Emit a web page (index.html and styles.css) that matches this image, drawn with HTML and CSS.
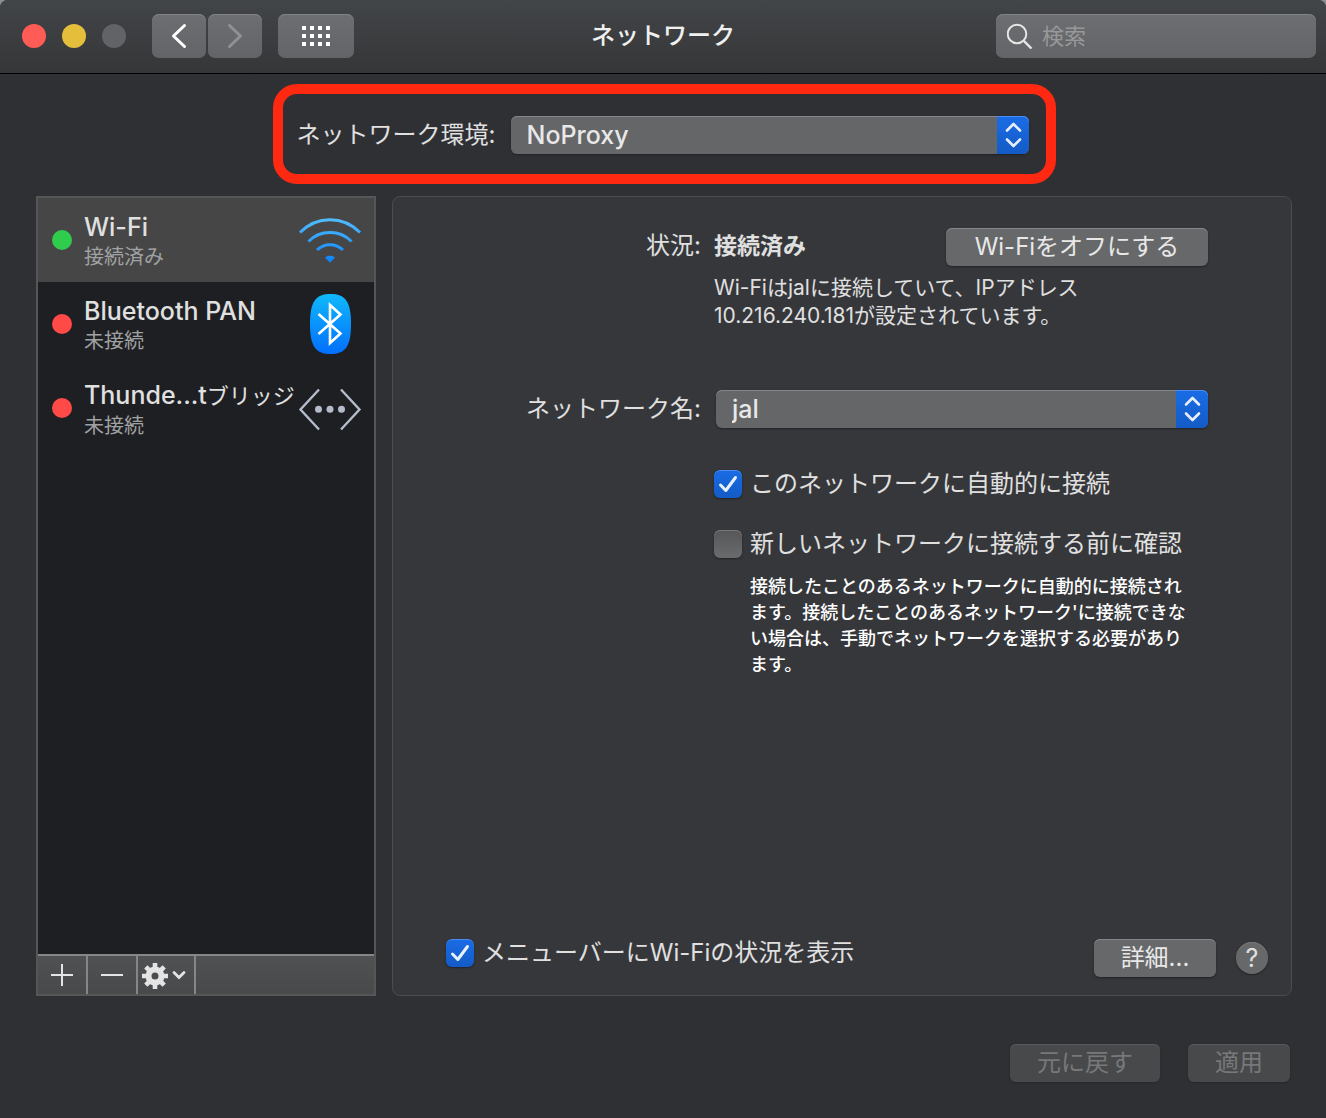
FILE: index.html
```html
<!DOCTYPE html>
<html lang="ja">
<head>
<meta charset="utf-8">
<meta name="viewport" content="width=device-width, initial-scale=1">
<title>ネットワーク</title>
<link rel="stylesheet" href="styles.css">
</head>
<body>
<div class="window">
  <header class="titlebar">
    <div class="titlebar-start">
      <div class="lights">
        <button class="light light-close" aria-label="閉じる"></button>
        <button class="light light-min" aria-label="しまう"></button>
        <button class="light light-zoom" aria-label="拡大" disabled></button>
      </div>
      <nav class="nav">
        <button class="tool" aria-label="戻る"><svg width="54" height="44" viewBox="0 0 54 44"><path d="M32.500 11.500 21.500 22 32.500 32.500" fill="none" stroke="#fff" stroke-width="3" stroke-linecap="round" stroke-linejoin="round"/></svg></button>
        <button class="tool" aria-label="進む" disabled><svg width="54" height="44" viewBox="0 0 54 44"><path d="M21.500 11.500 32.500 22 21.500 32.500" fill="none" stroke="#909194" stroke-width="3" stroke-linecap="round" stroke-linejoin="round"/></svg></button>
        <button class="tool tool-grid" aria-label="すべてを表示"><svg width="28" height="20" viewBox="0 0 28 20"><path d="M0 2h28M0 10h28M0 18h28" stroke="#fff" stroke-width="4" stroke-dasharray="4 4"/></svg></button>
      </nav>
    </div>
    <h1 class="title">ネットワーク</h1>
    <label class="search">
      <svg width="26" height="26" viewBox="0 0 26 26"><circle cx="10" cy="11" r="9.300" fill="none" stroke="#e6e6e6" stroke-width="2"/><path d="M16.800 17.800 24.500 25.500" stroke="#e6e6e6" stroke-width="2.400"/></svg>
      <input type="search" placeholder="検索" aria-label="検索">
    </label>
  </header>

  <main class="content">
    <div class="location">
      <label for="location">ネットワーク環境:</label>
      <div class="popup popup-location">
        <select id="location"><option>NoProxy</option></select>
        <svg class="popup-cap" width="32" height="38" viewBox="0 0 32 38"><path d="M10 14.500 16.500 8 23 14.500M10 23.500 16.500 30 23 23.500" fill="none" stroke="#e6eefb" stroke-width="2.600" stroke-linecap="round" stroke-linejoin="round"/></svg>
      </div>
    </div>

    <div class="panes">
      <aside class="sidebar">
        <ul class="services">
          <li class="service service-selected">
            <span class="dot dot-on"></span>
            <div class="service-text"><div class="service-name">Wi-Fi</div><div class="service-state">接続済み</div></div>
            <svg class="service-icon" width="64" height="60" viewBox="0 0 64 60">
              <defs><linearGradient id="wifi" gradientUnits="userSpaceOnUse" x1="0" y1="8" x2="0" y2="52"><stop offset="0" stop-color="#53bdfc"/><stop offset="1" stop-color="#0a84fc"/></linearGradient></defs>
              <g fill="none" stroke="url(#wifi)" stroke-width="3"><path d="M2 22.500C19 5.500 45 5.500 62 22.500"/><path d="M10.500 31.500C22 19.500 42 19.500 53.500 31.500"/><path d="M19 40C26.500 33 37.500 33 45 40"/></g>
              <path d="M27 47.500C30 45 34 45 37 47.500L32 52.800Z" fill="url(#wifi)"/>
            </svg>
          </li>
          <li class="service">
            <span class="dot dot-off"></span>
            <div class="service-text"><div class="service-name">Bluetooth PAN</div><div class="service-state">未接続</div></div>
            <svg class="service-icon" width="64" height="60" viewBox="0 0 64 60">
              <defs><linearGradient id="bt" x1="0" y1="0" x2="0" y2="1"><stop offset="0" stop-color="#10b8fb"/><stop offset="1" stop-color="#026ffc"/></linearGradient></defs>
              <path d="M32.500 0C47 0 53 7 53 30S47 60 32.500 60 12 53 12 30 18 0 32.500 0Z" fill="url(#bt)"/>
              <path d="M20.500 20 42.500 39.500 32 49V11L42.500 20.500 20.500 40" fill="none" stroke="#fff" stroke-width="2.600"/>
            </svg>
          </li>
          <li class="service">
            <span class="dot dot-off"></span>
            <div class="service-text"><div class="service-name">Thunde...t<span class="kana">ブリッジ</span></div><div class="service-state">未接続</div></div>
            <svg class="service-icon" width="64" height="60" viewBox="0 0 64 60">
              <g fill="none" stroke="#b4bccb" stroke-width="2.400"><path d="M21 11.500 2.500 31.500 21 51.500M43 11.500 61.500 31.500 43 51.500"/></g>
              <g fill="#b4bccb"><circle cx="20.500" cy="31.300" r="3.500"/><circle cx="32" cy="31.300" r="3.500"/><circle cx="43.500" cy="31.300" r="3.500"/></g>
            </svg>
          </li>
        </ul>
        <div class="side-tools">
          <button aria-label="追加"><svg width="22" height="22" viewBox="0 0 22 22"><path d="M0 11h22M11 0v22" stroke="#e4e4e4" stroke-width="2"/></svg></button>
          <button aria-label="削除"><svg width="22" height="22" viewBox="0 0 22 22"><path d="M0 11h22" stroke="#e4e4e4" stroke-width="2"/></svg></button>
          <button class="gear" aria-label="アクション"><svg width="50" height="28" viewBox="0 0 50 28">
            <g stroke="#e4e4e4" stroke-width="4.600"><path d="M14 2v5.500M14 22.500v5.500M1 15h5.500M21.500 15h5.500M4.800 5.800 9 10M19 20l4.200 4.200M23.200 5.800 19 10M9 20l-4.200 4.200"/></g>
            <circle cx="14" cy="15" r="6.500" fill="none" stroke="#e4e4e4" stroke-width="6"/>
            <path d="M33 11.500l5 5 5-5" fill="none" stroke="#e4e4e4" stroke-width="2.800" stroke-linecap="round"/></svg></button>
        </div>
      </aside>

      <section class="panel">
        <div class="form">
          <div class="label label-status">状況:</div>
          <div class="status">
            <strong>接続済み</strong>
            <button class="push push-wifi">Wi-Fiをオフにする</button>
          </div>
          <p class="message">Wi-Fiはjalに接続していて、IPアドレス<br>10.216.240.181が設定されています。</p>
          <label class="label" for="ssid">ネットワーク名:</label>
          <div class="popup popup-ssid">
            <select id="ssid"><option>jal</option></select>
            <svg class="popup-cap" width="32" height="38" viewBox="0 0 32 38"><path d="M10 14.500 16.500 8 23 14.500M10 23.500 16.500 30 23 23.500" fill="none" stroke="#e6eefb" stroke-width="2.600" stroke-linecap="round" stroke-linejoin="round"/></svg>
          </div>
          <label class="check check-auto"><input type="checkbox" checked>このネットワークに自動的に接続</label>
          <label class="check check-ask"><input type="checkbox">新しいネットワークに接続する前に確認</label>
          <p class="hint">接続したことのあるネットワークに自動的に接続され<br>ます。接続したことのあるネットワーク'に接続できな<br>い場合は、手動でネットワークを選択する必要があり<br>ます。</p>
        </div>
        <div class="panel-foot">
          <label class="check"><input type="checkbox" checked>メニューバーにWi-Fiの状況を表示</label>
          <div class="panel-actions">
            <button class="push push-detail">詳細...</button>
            <button class="help" aria-label="ヘルプ">?</button>
          </div>
        </div>
      </section>
    </div>

    <footer class="actions">
      <button class="push push-revert" disabled>元に戻す</button>
      <button class="push push-apply" disabled>適用</button>
    </footer>
  </main>
</div>
</body>
</html>
```

FILE: styles.css
```css
* { box-sizing: border-box; }

body {
  margin: 0;
  background: #8b8d8f;
  color: #e0e0e0;
  font: 24px/32px Inter, "Noto Sans CJK JP", sans-serif;
}

button, input, select { font: inherit; color: inherit; margin: 0; }
button { padding: 0; border: 0; background: none; }
svg { display: block; flex: none; }
h1, p, ul { margin: 0; padding: 0; }

.window {
  display: flex;
  flex-direction: column;
  min-height: 100vh;
  background: #2f3034;
  border-radius: 8px 8px 0 0;
  overflow: hidden;
}

/* Title bar */
.titlebar {
  display: grid;
  grid-template-columns: 1fr auto 1fr;
  align-items: center;
  height: 74px;
  padding: 0 10px 2px;
  background: linear-gradient(#424548, #353638);
  border-bottom: 1px solid #000;
}
.titlebar-start {
  display: flex;
  align-items: center;
  gap: 26px;
  padding-left: 12px;
}
.lights { display: flex; gap: 16px; }
.light { width: 24px; height: 24px; border-radius: 50%; }
.light-close { background: #ff5c55; }
.light-min { background: #e5bf3c; }
.light-zoom { background: #626366; }
.nav { display: flex; gap: 2px; }
.tool {
  display: flex;
  align-items: center;
  justify-content: center;
  width: 54px;
  height: 44px;
  border-radius: 7px;
  background: linear-gradient(#6d6e71, #636467);
  box-shadow: inset 0 1px #818285;
}
.tool-grid { width: 76px; margin-left: 14px; }
.title { font-size: 24px; font-weight: 500; color: #f0f0f0; }
.search {
  display: flex;
  align-items: center;
  gap: 9px;
  justify-self: end;
  width: 320px;
  height: 44px;
  padding: 0 11px;
  border-radius: 7px;
  background: linear-gradient(#6d6e71, #636467);
  box-shadow: inset 0 1px #818285;
}
.search input {
  flex: 1;
  min-width: 0;
  padding: 0;
  border: 0;
  outline: 0;
  background: none;
  font-size: 22px;
  appearance: none;
}
.search input::placeholder { color: #97989a; }

/* Content */
.content {
  flex: 1;
  display: flex;
  flex-direction: column;
  padding: 10px 34px 36px 36px;
}

.location {
  align-self: center;
  display: flex;
  align-items: center;
  justify-content: space-between;
  width: 783px;
  max-width: 100%;
  height: 100px;
  padding: 2px 17px 0 14px;
  border: 10px solid #ff2912;
  border-radius: 24px;
}

.popup { display: grid; height: 38px; }
.popup-location { width: 518px; }
.popup select {
  grid-area: 1 / 1;
  width: 100%;
  height: 38px;
  padding: 0 48px 0 16px;
  border: 0;
  border-radius: 6px;
  appearance: none;
  background: #656668;
  color: #e8e8e8;
  font-size: 25px;
  font-weight: 500;
  box-shadow: inset 0 1px #858688, 0 1px 2px #222326;
}
.popup-cap {
  grid-area: 1 / 1;
  justify-self: end;
  border-radius: 0 6px 6px 0;
  background: linear-gradient(#1a6ce6, #135bc6);
  box-shadow: inset 0 1px #4b8df0;
  pointer-events: none;
}

.panes {
  flex: 1;
  display: grid;
  grid-template-columns: 340px 1fr;
  gap: 16px;
  margin-top: 12px;
}

/* Service list */
.sidebar {
  display: flex;
  flex-direction: column;
  border: 2px solid #565656;
  background: #1e1f23;
}
.services { flex: 1; list-style: none; }
.service {
  display: flex;
  align-items: center;
  gap: 12px;
  height: 84px;
  padding: 0 12px 0 14px;
}
.service-selected { background: #464646; }
.dot { flex: none; width: 20px; height: 20px; border-radius: 50%; }
.dot-on { background: #2fcc4d; }
.dot-off { background: #ff4a47; }
.service-text { flex: 1; min-width: 0; white-space: nowrap; }
.service-name { font-size: 25px; font-weight: 500; line-height: 34px; }
.service-name .kana { font-size: 22px; font-weight: 400; }
.service-state { font-size: 20px; line-height: 26px; color: #a0a1a2; }
.service-icon { margin-left: -16px; }

.side-tools {
  display: flex;
  height: 40px;
  border-top: 2px solid #868686;
  background: linear-gradient(#505153, #48494b);
}
.side-tools button {
  display: flex;
  align-items: center;
  justify-content: center;
  width: 50px;
  border-right: 2px solid #868686;
}
.side-tools .gear { width: 58px; }

/* Detail panel */
.panel {
  display: flex;
  flex-direction: column;
  justify-content: space-between;
  border: 1px solid #4b4c4f;
  border-radius: 8px;
  background: #36373b;
}
.form {
  display: grid;
  grid-template-columns: 1fr 494px;
  column-gap: 13px;
  padding: 31px 83px 0 24px;
}
.label { justify-self: end; line-height: 38px; }
.label-status { line-height: 36px; }
.status {
  display: flex;
  align-items: flex-start;
  justify-content: space-between;
}
.status strong { font-size: 23px; font-weight: 700; line-height: 36px; }
.message, .check-auto, .check-ask, .hint { grid-column: 2; }
.message { margin: 8px 0 60px; font-size: 21px; line-height: 28px; }
.popup-ssid { margin-left: 2px; }
.check { display: flex; align-items: center; gap: 8px; height: 28px; }
.check-auto { margin-top: 42px; }
.check-ask { margin-top: 32px; }
.check input {
  flex: none;
  width: 28px;
  height: 28px;
  border-radius: 6px;
  appearance: none;
  background: linear-gradient(#555658, #6a6b6d);
  box-shadow: inset 0 1px #77787a, 0 1px 2px #222326;
}
.check input:checked {
  background:
    url("data:image/svg+xml,%3Csvg xmlns='http://www.w3.org/2000/svg' viewBox='0 0 28 28'%3E%3Cpath d='M6.500 15 11.800 20.500 21.500 7.500' fill='none' stroke='%23e8f0fc' stroke-width='3' stroke-linecap='round' stroke-linejoin='round'/%3E%3C/svg%3E"),
    linear-gradient(#1a6ce6, #135bc6);
  box-shadow: inset 0 1px #4b8df0, 0 1px 2px #222326;
}
.hint {
  margin-top: 16px;
  padding-left: 36px;
  font-size: 18px;
  font-weight: 500;
  line-height: 26px;
  color: #fff;
  white-space: nowrap;
}

.panel-foot {
  display: flex;
  justify-content: space-between;
  padding: 0 23px 18px 53px;
}
.panel-actions { display: flex; align-items: center; gap: 20px; }

.push {
  height: 38px;
  border-radius: 6px;
  background: #67686a;
  color: #e8e8e8;
  line-height: 38px;
  box-shadow: inset 0 1px #858688, 0 1px 2px #222326;
}
.push:disabled {
  background: #48494b;
  color: #77787a;
  box-shadow: inset 0 1px #58595b, 0 1px 2px #27282a;
}
.push-wifi { width: 262px; }
.push-detail { width: 122px; }
.push-revert { width: 150px; }
.push-apply { width: 102px; }
.help {
  width: 32px;
  height: 32px;
  border-radius: 50%;
  background: #67686a;
  font-size: 25px;
  box-shadow: inset 0 1px #77787a, 0 1px 2px #222326;
}

.actions {
  display: flex;
  justify-content: flex-end;
  gap: 28px;
  margin-top: 48px;
  padding-right: 2px;
}
```
